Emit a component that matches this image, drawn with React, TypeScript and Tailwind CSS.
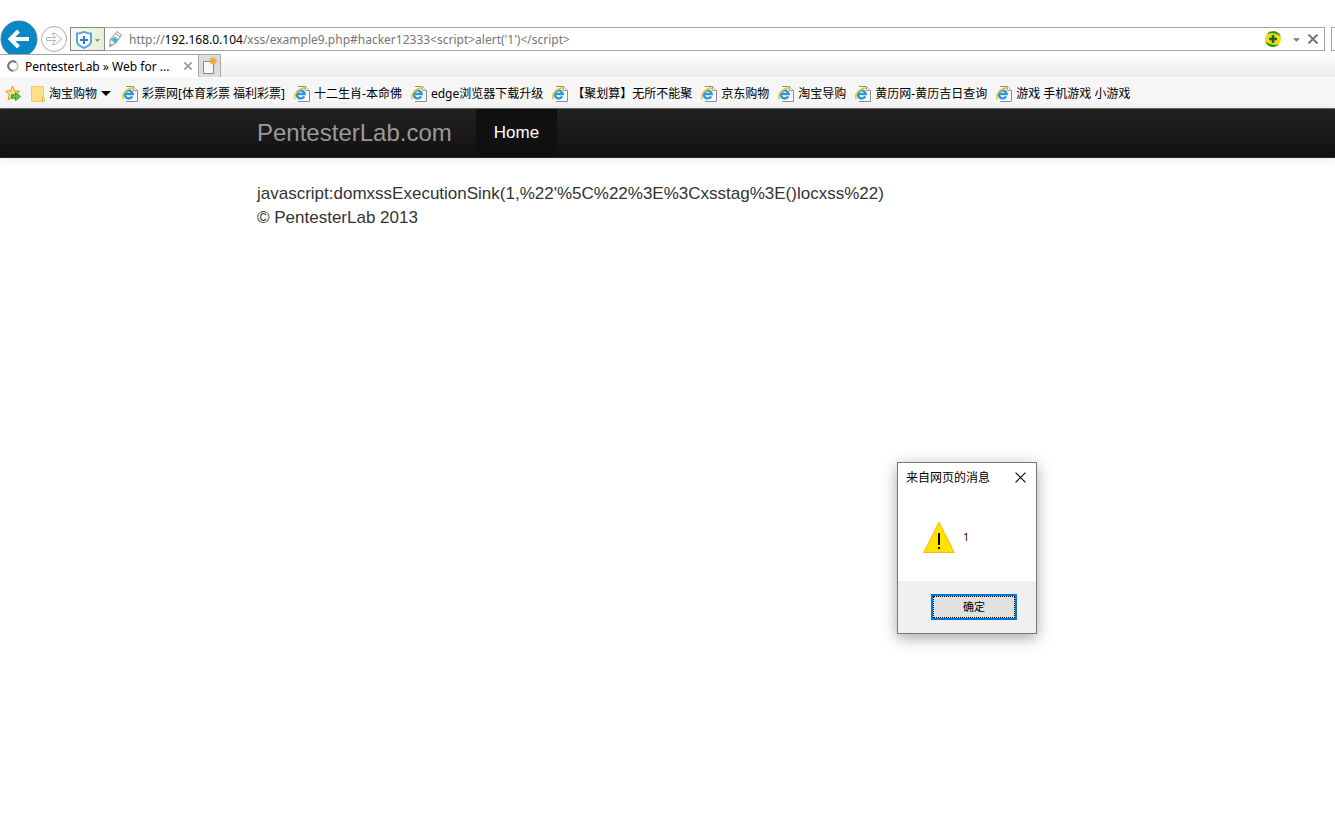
import React from "react";

const bookmarks = [
  "彩票网[体育彩票 福利彩票]",
  "十二生肖-本命佛",
  "edge浏览器下载升级",
  "【聚划算】无所不能聚",
  "京东购物",
  "淘宝导购",
  "黄历网-黄历吉日查询",
  "游戏 手机游戏 小游戏",
];

function PageIcon() {
  return (
    <svg width="16" height="16" viewBox="0 0 16 16" className="shrink-0" aria-hidden="true">
      <path d="M4 .5h7.500l4 4v11H4z" fill="#fcfcfc" />
      <path d="M4 .5h7.500l4 4v11H4" fill="none" stroke="#8c8c8c" />
      <path d="M11.500.5v4h4" fill="#eee" stroke="#999" />
      <path d="M10.200 10.400A4 4 0 1 1 10.700 8H3.500" fill="none" stroke="#2b98dd" strokeWidth="2.400" />
      <path d="M1.500 13C-1.200 11.500 2 5.200 6.800 2.800c2.600-1.200 4.500-.7 4.100 1.200" fill="none" stroke="#efc91e" strokeWidth="1.600" />
    </svg>
  );
}

function BackIcon() {
  return (
    <svg width="38" height="38" viewBox="0 0 38 38" aria-hidden="true">
      <circle cx="19" cy="19" r="18" fill="#0986c5" stroke="#47809e" />
      <path d="M29 19H11M18.5 11l-8 8 8 8" fill="none" stroke="#fff" strokeWidth="4" />
    </svg>
  );
}

function ForwardIcon() {
  return (
    <svg width="28" height="28" viewBox="0 0 28 28" aria-hidden="true">
      <circle cx="14" cy="14" r="12.5" fill="#fff" stroke="#ababab" />
      <path d="M6.5 12.5h9l-3.5-4h3.5l6 5.5-6 5.5H12l3.5-4h-9z" fill="#fff" stroke="#b5b5b5" />
    </svg>
  );
}

function ShieldIcon() {
  return (
    <svg width="16" height="18" viewBox="0 0 16 18" aria-hidden="true">
      <path d="M1 2.5C5 2.5 6 1 8 1s3 1.500 7 1.500V11c0 3-4 4.500-7 6-3-1.500-7-3-7-6z" fill="#fff" stroke="#5aa0ee" strokeWidth="2" />
      <path d="M8 5v8M4 9h8" stroke="#287be0" strokeWidth="2" />
    </svg>
  );
}

function PenIcon() {
  return (
    <svg width="15" height="18" viewBox="0 0 15 18" aria-hidden="true">
      <path d="M1.500 16.500L2.500 9 9 1.500l4.500 3.500-6 8.500z" fill="#fff" stroke="#8a949a" />
      <path d="M3.500 9l3-2.500 4 3-3 3.500z" fill="#45b4d9" />
      <path d="M7.500 3.500l5 3.500M2.500 9l5 4.500M1.500 16.500l2.500-3" fill="none" stroke="#7d8a91" />
    </svg>
  );
}

function SafetyIcon() {
  return (
    <svg width="18" height="18" viewBox="0 0 18 18" aria-hidden="true">
      <circle cx="9" cy="9" r="8" fill="#f9d917" />
      <path d="M3 4a8 8 0 0 1 13.800 3C14 3.500 8 2.500 3 4zM1.200 11A8 8 0 0 0 15 14.200C10 15.500 4.500 14.500 1.200 11z" fill="#2d961c" />
      <path d="M9 5v8M5 9h8" stroke="#146b13" strokeWidth="2.600" />
    </svg>
  );
}

function Caret({ className }: { className: string }) {
  return (
    <svg viewBox="0 0 10 5" className={className} aria-hidden="true">
      <path d="M0 0h10L5 5z" fill="currentColor" />
    </svg>
  );
}

function Cross({ className, weight }: { className: string; weight: number }) {
  return (
    <svg viewBox="0 0 10 10" className={className} aria-hidden="true">
      <path d="M.5.5l9 9M9.500.5l-9 9" stroke="currentColor" strokeWidth={weight} />
    </svg>
  );
}

function BrowserChrome() {
  return (
    <header className="font-['Noto_Sans','Noto_Sans_CJK_SC',sans-serif] text-xs text-black">
      <div className="flex h-[54px] items-start overflow-hidden pt-5">
        <button aria-label="Back" className="shrink-0">
          <BackIcon />
        </button>
        <button aria-label="Forward" className="ml-0.5 mt-[5px] shrink-0">
          <ForwardIcon />
        </button>
        <div className="ml-0.5 mt-[7px] flex h-6 min-w-0 flex-1 items-center border border-[#a5a5a5] bg-white">
          <button
            aria-label="Protection"
            className="-my-px -ml-px flex h-6 w-[35px] shrink-0 items-center gap-[3px] border border-[#888] bg-linear-to-r from-[#f4fbe9] to-[#e4f2d2] pl-[5px] pt-0.5"
          >
            <ShieldIcon />
            <Caret className="h-[3px] w-[5px] text-[#777]" />
          </button>
          <span className="ml-[3px] shrink-0">
            <PenIcon />
          </span>
          <div
            role="textbox"
            aria-label="Address"
            contentEditable
            suppressContentEditableWarning
            spellCheck={false}
            className="ml-1.5 min-w-0 flex-1 truncate pt-0.5 text-[#767676] outline-none"
          >
            http://<span className="text-black">192.168.0.104</span>
            {"/xss/example9.php#hacker12333<script>alert('1')</script>"}
          </div>
          <button aria-label="Safety" className="mr-[11px] shrink-0">
            <SafetyIcon />
          </button>
          <button aria-label="Address history" className="mr-2 shrink-0 pt-0.5">
            <Caret className="h-1 w-[7px] text-[#777]" />
          </button>
          <button aria-label="Stop" className="mr-1.5 shrink-0">
            <Cross className="size-[10px] text-[#777]" weight={2} />
          </button>
        </div>
        <div className="ml-1.5 mt-[7px] h-6 w-1 shrink-0 border border-r-0 border-[#a5a5a5]" />
      </div>

      <div className="flex h-[23px] bg-linear-to-b from-white to-[#ebebeb]">
        <div className="flex w-[198px] items-center border-t border-[#a5a5a5] bg-white pl-[7px] pr-1.5">
          <svg width="12" height="12" viewBox="0 0 12 12" aria-hidden="true">
            <circle cx="6" cy="6" r="4.800" fill="none" stroke="#c4c4c4" strokeWidth="2" />
            <path d="M9 2.200A4.800 4.800 0 1 0 6 10.800" fill="none" stroke="#777" strokeWidth="2" />
          </svg>
          <span className="ml-1.5 flex-1 truncate pt-0.5">PentesterLab » Web for ...</span>
          <button aria-label="Close tab">
            <Cross className="size-2 text-[#999]" weight={2} />
          </button>
        </div>
        <button
          aria-label="New tab"
          className="flex w-[23px] items-center justify-center border border-b-0 border-[#ababab] bg-[#dcdcdc]"
        >
          <svg width="15" height="18" viewBox="0 0 15 18" aria-hidden="true">
            <path d="M1.500 4.500h10v12h-10z" fill="#f8f8f8" stroke="#888" />
            <path d="M11 0v8M7 4h8M8.200 1.200l5.600 5.600M13.800 1.200L8.200 6.800" stroke="#efa52c" strokeWidth="1.300" />
          </svg>
        </button>
      </div>

      <nav
        aria-label="Favorites"
        className="flex h-8 items-center gap-[9px] overflow-hidden border-b border-t border-b-[#666] border-t-white bg-[#f6f6f6] pl-[5px] pt-px whitespace-nowrap"
      >
        <button aria-label="Add to favorites" className="shrink-0">
          <svg width="17" height="17" viewBox="0 0 17 17" aria-hidden="true">
            <path d="M7.500 1l2 4.800 5.200.4-4 3.500 1.300 5.200-4.500-2.800L3 14.900l1.200-5.200L.7 6.200l4.900-.4z" fill="#fde07a" stroke="#d99a20" />
            <path d="M6.500 9.800h4V7.500l5 4-5 4v-2.300h-4z" fill="#5bc947" stroke="#2e9630" />
          </svg>
        </button>
        <button className="flex shrink-0 items-center gap-1 pr-0.5">
          <svg width="14" height="16" viewBox="0 0 14 16" aria-hidden="true">
            <path d="M.5.500h12v11l1 1v3H.500z" fill="#fce08a" stroke="#efcb66" />
            <path d="M11.500 11v4.500" stroke="#d5ad3f" />
          </svg>
          淘宝购物
          <Caret className="h-[5px] w-[10px]" />
        </button>
        {bookmarks.map((name) => (
          <a key={name} href="#" className="flex shrink-0 items-center gap-1">
            <PageIcon />
            {name}
          </a>
        ))}
      </nav>
    </header>
  );
}

function AlertDialog() {
  return (
    <div
      role="alertdialog"
      aria-labelledby="alert-title"
      className="absolute left-[897px] top-[462px] w-[140px] border border-[#777] bg-white font-['Noto_Sans','Noto_Sans_CJK_SC',sans-serif] text-xs text-black shadow-[0_4px_14px_rgba(0,0,0,0.35)]"
    >
      <div className="flex h-[30px] items-center justify-between pl-2 pr-2.5">
        <h2 id="alert-title">来自网页的消息</h2>
        <button aria-label="Close" className="pb-0.5">
          <Cross className="size-[11px]" weight={1} />
        </button>
      </div>
      <div className="flex h-[88px] items-center gap-2 pl-[25px]">
        <svg width="32" height="32" viewBox="0 0 32 32" aria-hidden="true">
          <path d="M16 1L31.300 31.500H.7z" fill="#ffe100" stroke="#fdb813" />
          <path d="M15 12h2v12h-2zM15 26h2v2h-2z" fill="#000" />
        </svg>
        <p className="text-[11px] text-[#302]">1</p>
      </div>
      <div className="flex h-[52px] items-center justify-end bg-[#f0f0f0] pr-[19px]">
        <button className="h-[26px] w-[86px] border-2 border-[#0078d7] bg-[#e1e1e1] text-[11px]">
          <span className="flex h-full items-center justify-center border border-dotted border-black">确定</span>
        </button>
      </div>
    </div>
  );
}

export default function App() {
  return (
    <div className="relative min-h-screen bg-white">
      <BrowserChrome />
      <nav
        aria-label="Site"
        className="h-[49px] border-b border-[#252525] bg-linear-to-b from-[#222] to-[#111] font-['Liberation_Sans',sans-serif] shadow-[0_1px_10px_rgba(0,0,0,0.1)]"
      >
        <div className="mx-auto flex h-full max-w-[821px] items-center">
          <a href="#" className="text-2xl text-[#999]">
            PentesterLab.com
          </a>
          <a
            href="#"
            className="ml-6 flex h-full items-center bg-[#111] px-[18px] text-[17px] text-white shadow-[inset_0_3px_8px_rgba(0,0,0,0.125)]"
          >
            Home
          </a>
        </div>
      </nav>
      <main className="mx-auto max-w-[821px] pt-6 font-['Liberation_Sans',sans-serif] text-[17px] leading-6 text-[#333]">
        <p>{"javascript:domxssExecutionSink(1,%22'%5C%22%3E%3Cxsstag%3E()locxss%22)"}</p>
        <footer>© PentesterLab 2013</footer>
      </main>
      <AlertDialog />
    </div>
  );
}
